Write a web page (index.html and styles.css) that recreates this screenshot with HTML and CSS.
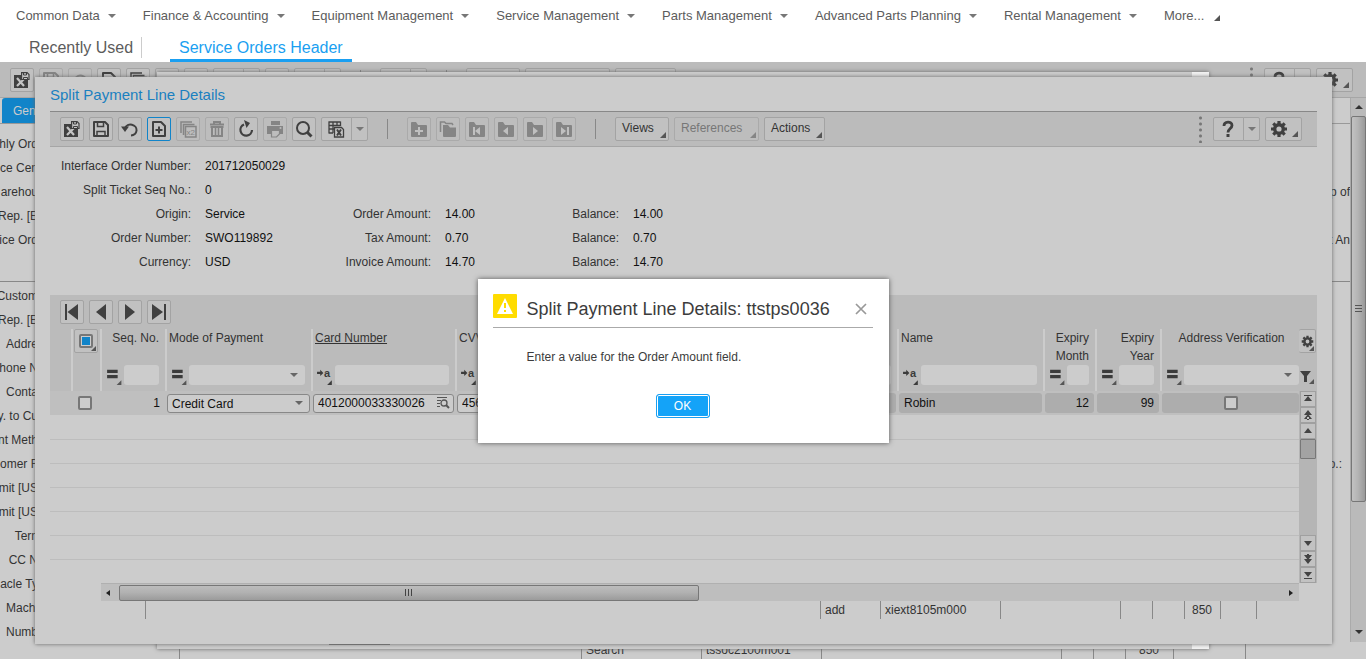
FILE: index.html
```html
<!DOCTYPE html>
<html lang="en">
<head>
<meta charset="utf-8">
<title>Service Orders Header</title>
<link rel="stylesheet" href="styles.css">
</head>
<body>
<svg class="defs" aria-hidden="true">
  <symbol id="exit" viewBox="0 0 18 18"><path fill="currentColor" d="M1 4h8v5h6v8H1z"/><path stroke="#c4c4c4" stroke-width="2.2" d="M4 7l7 8M11 8l-7 7"/><path fill="#c4c4c4" stroke="currentColor" stroke-width="1.200" d="M8.600 1.600h5.500l1.900 1.900v5H8.600z"/><path fill="none" stroke="currentColor" d="M10.500 2v2h3V2M10.500 8.500v-2h4v2"/></symbol>
  <symbol id="save" viewBox="0 0 18 18"><path fill="none" stroke="currentColor" stroke-width="2" stroke-linejoin="round" d="M2 2h11l3 3v11H2z"/><path fill="none" stroke="currentColor" stroke-width="1.500" d="M5.500 2v4.500h6V2M5 15.500v-4h8v4"/></symbol>
  <symbol id="undo" viewBox="0 0 18 18"><path fill="none" stroke="currentColor" stroke-width="2" d="M4 8a6 5.500 0 1 1 6 7.500"/><path fill="currentColor" d="M0 6.500h8L4 12z"/></symbol>
  <symbol id="new" viewBox="0 0 18 18"><path fill="none" stroke="currentColor" stroke-width="2" stroke-linejoin="round" d="M3 2h8l4 4v10H3z"/><path stroke="currentColor" stroke-width="2" d="M9 6.500v7M5.500 10h7"/></symbol>
  <symbol id="trash" viewBox="0 0 18 18"><path fill="none" stroke="currentColor" stroke-width="2" d="M2 4.500h14M6 4V2h6v2M4 7v9h10V7M2.500 7h13"/><path stroke="currentColor" stroke-width="1.500" d="M7.500 8v7M10.500 8v7"/></symbol>
  <symbol id="refresh" viewBox="0 0 18 18"><path fill="none" stroke="currentColor" stroke-width="2.200" d="M7 4.500a5.800 5.800 0 1 0 8 5.500"/><path fill="currentColor" d="M7 0l6 3-3.500 5z"/></symbol>
  <symbol id="print" viewBox="0 0 18 18"><path fill="currentColor" d="M5 1h9v4H5zM1 6h16v8h-3v-3H5v3H1z"/><path fill="none" stroke="currentColor" stroke-width="1.200" d="M5.500 11v6h5l3-3v-3"/><circle cx="14.500" cy="8" r="1" fill="#bbb"/></symbol>
  <symbol id="search" viewBox="0 0 18 18"><circle cx="8" cy="8" r="6" fill="none" stroke="currentColor" stroke-width="2"/><path stroke="currentColor" stroke-width="3" d="M12 12l4.500 4.500"/></symbol>
  <symbol id="excel" viewBox="0 0 18 18"><path fill="none" stroke="currentColor" stroke-width="1.300" d="M.5 2h12M.5 5.500h12M.5 9H6M.5 13H5M1 1.500V13M5 1.500V13M9 1.500V6M12.500 1.500V6"/><path fill="#c4c4c4" stroke="currentColor" stroke-width="1.300" d="M6.500 7.500h7l2 2v7.500h-9z"/><path stroke="currentColor" stroke-width="2" d="M9 9.500l4 6M13 9.500l-4 6"/></symbol>
  <symbol id="fold" viewBox="0 0 18 18"><path fill="currentColor" d="M1 3q0-1 1-1h4l2 3h8q1 0 1 1v10q0 1-1 1H2q-1 0-1-1z"/></symbol>
  <symbol id="fplus" viewBox="0 0 18 18"><use href="#fold"/><path stroke="#c0c0c0" stroke-width="2" d="M9 7v8M5 11h8"/></symbol>
  <symbol id="fmulti" viewBox="0 0 18 18"><path fill="none" stroke="currentColor" stroke-width="1.500" d="M1.500 12V2h4l1.500 1.500h6l1 1.500"/><path fill="currentColor" d="M4 5h5l2 2.500h6V16q0 1-1 1H5q-1 0-1-1z"/></symbol>
  <symbol id="ffirst" viewBox="0 0 18 18"><use href="#fold"/><path fill="#c0c0c0" d="M5 7h2v8H5zM12 7v8l-5-4z"/></symbol>
  <symbol id="fprev" viewBox="0 0 18 18"><use href="#fold"/><path fill="#c0c0c0" d="M11 7v8l-5-4z"/></symbol>
  <symbol id="fnext" viewBox="0 0 18 18"><use href="#fold"/><path fill="#c0c0c0" d="M7 7v8l5-4z"/></symbol>
  <symbol id="flast" viewBox="0 0 18 18"><use href="#fold"/><path fill="#c0c0c0" d="M12 7h2v8h-2zM6 7v8l5-4z"/></symbol>
  <symbol id="help" viewBox="0 0 18 18"><path fill="none" stroke="currentColor" stroke-width="2.800" d="M4 6C4 1 12 1 12 5.500 12 8.500 8 8.500 8 12.500"/><path fill="currentColor" d="M6.500 14h3v3h-3z"/></symbol>
  <symbol id="gear" viewBox="0 0 18 18"><circle cx="9" cy="9" r="4.300" fill="none" stroke="currentColor" stroke-width="3.400"/><path stroke="currentColor" stroke-width="3.200" d="M9 1v3M9 14v3M1 9h3M14 9h3M3.300 3.300l2 2M12.700 12.700l2 2M3.300 14.700l2-2M12.700 5.300l2-2"/></symbol>
  <symbol id="first" viewBox="0 0 18 18"><path fill="currentColor" d="M2 1h2v16H2zM15 1v16L4.500 9z"/></symbol>
  <symbol id="prev" viewBox="0 0 18 18"><path fill="currentColor" d="M14 1v16L4 9z"/></symbol>
  <symbol id="next" viewBox="0 0 18 18"><path fill="currentColor" d="M4 1v16l10-8z"/></symbol>
  <symbol id="last" viewBox="0 0 18 18"><path fill="currentColor" d="M14 1h2v16h-2zM2 1v16l11-8z"/></symbol>
  <symbol id="eq" viewBox="0 0 18 18"><path fill="currentColor" d="M2 4h10v3H2zM2 9h10v3H2z"/><path fill="#555" d="M15.500 14v5h-5z"/></symbol>
  <symbol id="lookup" viewBox="0 0 14 14"><path stroke="currentColor" d="M1 1.500h10M1 4.500h4M1 7.500h3M1 10.500h3"/><circle cx="8" cy="7" r="3" fill="none" stroke="currentColor" stroke-width="1.300"/><path stroke="currentColor" stroke-width="2" d="M10 9l3 3"/></symbol>
  <symbol id="funnel" viewBox="0 0 16 16"><path fill="currentColor" d="M1 2h11L8 7v6H5V7z"/><path fill="#555" d="M15 10v5h-5z"/></symbol>
  <symbol id="up1" viewBox="0 0 14 14"><path fill="currentColor" d="M3 9h8L7 4z"/></symbol>
  <symbol id="up2" viewBox="0 0 14 14"><path fill="currentColor" d="M3 7h8L7 2zM3 11h8L7 6zM6 9h2v3H6z"/></symbol>
  <symbol id="up3" viewBox="0 0 14 14"><path fill="currentColor" d="M3 3h8v1H3zM3 9h8L7 4z"/></symbol>
  <symbol id="dn1" viewBox="0 0 14 14"><path fill="currentColor" d="M3 5h8l-4 5z"/></symbol>
  <symbol id="dn2" viewBox="0 0 14 14"><path fill="currentColor" d="M3 3h8L7 8zM3 7h8l-4 5zM6 2h2v3H6z"/></symbol>
  <symbol id="dn3" viewBox="0 0 14 14"><path fill="currentColor" d="M3 10h8v1H3zM3 4h8L7 9z"/></symbol>
  <symbol id="pages" viewBox="0 0 18 18"><path fill="none" stroke="currentColor" stroke-width="1.500" d="M2 13V2h11M4.500 15V4.500h11M6.500 6.500H17V17H6.500z"/></symbol>
  <symbol id="to" viewBox="0 0 18 18"><path fill="currentColor" d="M1 6h3V4l3 3-3 3V8H1zM15 14v5h-5z"/></symbol>
</svg>

<nav class="menu">
  <button class="menu-item">Common Data<i class="caret"></i></button>
  <button class="menu-item">Finance &amp; Accounting<i class="caret"></i></button>
  <button class="menu-item">Equipment Management<i class="caret"></i></button>
  <button class="menu-item">Service Management<i class="caret"></i></button>
  <button class="menu-item">Parts Management<i class="caret"></i></button>
  <button class="menu-item">Advanced Parts Planning<i class="caret"></i></button>
  <button class="menu-item">Rental Management<i class="caret"></i></button>
  <button class="menu-item">More...<i class="corner"></i></button>
</nav>
<nav class="tabs">
  <a class="tab recent" href="#">Recently Used</a>
  <a class="tab current" href="#">Service Orders Header</a>
</nav>

<main class="workspace">
  <div class="toolbar back-toolbar">
    <button class="btn" aria-label="Save and exit"><svg><use href="#exit"/></svg></button>
    <button class="btn off" aria-label="Save"><svg><use href="#save"/></svg></button>
    <button class="btn off" aria-label="Undo"><svg><use href="#undo"/></svg></button>
    <button class="btn" aria-label="New"><svg><use href="#new"/></svg></button>
    <button class="btn" aria-label="Duplicate"><svg><use href="#pages"/></svg></button>
    <button class="btn" aria-label="Delete"></button>
    <button class="btn" aria-label="Refresh"></button>
    <span class="split"><button class="btn wide" aria-label="Print"></button><button class="btn drop" aria-label="Print options"></button></span>
    <button class="btn" aria-label="Find"></button>
    <span class="split"><button class="btn wide" aria-label="Export"></button><button class="btn drop" aria-label="Export options"></button></span>
    <i class="sep"></i>
    <span class="split"><button class="btn wide" aria-label="Notes"></button><button class="btn drop" aria-label="Note options"></button></span>
    <i class="sep"></i>
    <button class="btn text views" aria-label="Views"></button>
    <button class="btn text refs" aria-label="References"></button>
    <button class="btn text acts" aria-label="Actions"></button>
    <i class="dots"></i>
    <span class="split"><button class="btn wide" aria-label="Help"><svg><use href="#help"/></svg></button><button class="btn drop" aria-label="Help options"></button></span>
    <button class="btn gear" aria-label="Settings"><svg><use href="#gear"/></svg><i class="corner"></i></button>
  </div>
  <div class="back">
    <div class="back-body">
      <div class="back-tabs"><button class="back-tab">General</button></div>
      <div class="back-group">
        <div class="back-row"><span>hly Ord</span></div>
        <div class="back-row"><span>ce Cen</span></div>
        <div class="back-row"><span>arehou</span><span class="far">p of</span></div>
        <div class="back-row"><span>Rep. [E</span></div>
        <div class="back-row"><span>ice Ord</span><span class="far">t An</span></div>
      </div>
      <div class="back-group second">
        <div class="back-row"><span>Custom</span></div>
        <div class="back-row"><span>Rep. [E</span></div>
        <div class="back-row"><span>Addre</span></div>
        <div class="back-row"><span>hone N</span></div>
        <div class="back-row"><span>Conta</span></div>
        <div class="back-row"><span>y. to Cu</span></div>
        <div class="back-row"><span>nt Meth</span></div>
        <div class="back-row"><span>omer F</span><span class="far colon">o.:</span></div>
        <div class="back-row"><span>mit [US</span></div>
        <div class="back-row"><span>mit [US</span></div>
        <div class="back-row"><span>Tern</span></div>
        <div class="back-row"><span>CC N</span></div>
        <div class="back-row"><span>acle Ty</span></div>
        <div class="back-row"><span>Machi</span></div>
        <div class="back-row"><span>Numb</span></div>
      </div>
    </div>
    <div class="page-scroll"><i class="arrow-up"></i><div class="page-thumb"><i class="grip-v"></i></div><i class="arrow-down"></i></div>
  </div>
  <div class="status back-status">
    <span class="grow"></span><span class="w120">Search</span><span class="w120">tssoc2100m001</span><span class="w240"></span><span class="w32"></span><span class="w32"></span><span class="w48 num">850</span><span class="w72"></span><span class="tail"></span>
  </div>

  <div class="window middle"><i class="peek"></i><i class="tick"></i><i class="peek low"></i></div>

  <section class="window front">
    <h1 class="window-title">Split Payment Line Details</h1>
    <div class="toolbar">
      <button class="btn" aria-label="Save and exit"><svg><use href="#exit"/></svg></button>
      <button class="btn" aria-label="Save"><svg><use href="#save"/></svg></button>
      <button class="btn" aria-label="Undo"><svg><use href="#undo"/></svg></button>
      <button class="btn focus" aria-label="New"><svg><use href="#new"/></svg></button>
      <button class="btn off" aria-label="Duplicate"><svg><use href="#pages"/><text x="7.500" y="14.500" font-size="8" fill="currentColor">x2</text></svg></button>
      <button class="btn off" aria-label="Delete"><svg><use href="#trash"/></svg></button>
      <button class="btn" aria-label="Refresh"><svg><use href="#refresh"/></svg></button>
      <button class="btn off" aria-label="Print"><svg><use href="#print"/></svg></button>
      <button class="btn" aria-label="Find"><svg><use href="#search"/></svg></button>
      <span class="split"><button class="btn wide" aria-label="Export"><svg><use href="#excel"/></svg></button><button class="btn drop" aria-label="Export options"><i class="caret"></i></button></span>
      <i class="sep"></i>
      <button class="btn off" aria-label="New group"><svg><use href="#fplus"/></svg></button>
      <button class="btn off" aria-label="Duplicate group"><svg><use href="#fmulti"/></svg></button>
      <button class="btn off" aria-label="First group"><svg><use href="#ffirst"/></svg></button>
      <button class="btn off" aria-label="Previous group"><svg><use href="#fprev"/></svg></button>
      <button class="btn off" aria-label="Next group"><svg><use href="#fnext"/></svg></button>
      <button class="btn off" aria-label="Last group"><svg><use href="#flast"/></svg></button>
      <i class="sep"></i>
      <button class="btn text views">Views<i class="corner"></i></button>
      <button class="btn text refs off">References<i class="corner"></i></button>
      <button class="btn text acts">Actions<i class="corner"></i></button>
      <i class="dots"></i>
      <span class="split"><button class="btn wide" aria-label="Help"><svg><use href="#help"/></svg></button><button class="btn drop" aria-label="Help options"><i class="caret"></i></button></span>
      <button class="btn gear" aria-label="Settings"><svg><use href="#gear"/></svg><i class="corner"></i></button>
    </div>

    <dl class="fields">
      <dt>Interface Order Number:</dt><dd class="span">201712050029</dd>
      <dt>Split Ticket Seq No.:</dt><dd class="span">0</dd>
      <dt>Origin:</dt><dd>Service</dd><dt>Order Amount:</dt><dd>14.00</dd><dt>Balance:</dt><dd>14.00</dd>
      <dt>Order Number:</dt><dd>SWO119892</dd><dt>Tax Amount:</dt><dd>0.70</dd><dt>Balance:</dt><dd>0.70</dd>
      <dt>Currency:</dt><dd>USD</dd><dt>Invoice Amount:</dt><dd>14.70</dd><dt>Balance:</dt><dd>14.70</dd>
    </dl>

    <div class="grid">
      <div class="grid-nav">
        <button class="btn" aria-label="First"><svg><use href="#first"/></svg></button>
        <button class="btn" aria-label="Previous"><svg><use href="#prev"/></svg></button>
        <button class="btn" aria-label="Next"><svg><use href="#next"/></svg></button>
        <button class="btn" aria-label="Last"><svg><use href="#last"/></svg></button>
      </div>
      <div class="grid-main">
        <div class="lines-wrap">
        <table class="lines">
          <colgroup><col class="c21"><col class="c29"><col class="c65"><col class="c146"><col class="c144"><col class="c65"><col><col class="c146"><col class="c52"><col class="c65"><col class="c139"></colgroup>
          <thead>
            <tr>
              <th class="bare"></th>
              <th class="pick"><button class="btn" aria-label="Select all"><i class="box all"></i><i class="corner"></i></button></th>
              <th><div class="head end">Seq. No.</div><div class="filter"><svg><use href="#eq"/></svg><input aria-label="Filter Seq. No."></div></th>
              <th><div class="head">Mode of Payment</div><div class="filter"><svg><use href="#eq"/></svg><span class="select"><select aria-label="Filter Mode of Payment"><option></option></select></span></div></th>
              <th><div class="head"><u>Card Number</u></div><div class="filter"><svg><use href="#to"/><text x="8" y="12">a</text></svg><input aria-label="Filter Card Number"></div></th>
              <th><div class="head">CVV</div><div class="filter"><svg><use href="#to"/><text x="8" y="12">a</text></svg><input aria-label="Filter CVV"></div></th>
              <th><div class="head"></div><div class="filter"><input aria-label="Filter amount"></div></th>
              <th><div class="head">Name</div><div class="filter"><svg><use href="#to"/><text x="8" y="12">a</text></svg><input aria-label="Filter Name"></div></th>
              <th><div class="head end">Expiry<br>Month</div><div class="filter"><svg><use href="#eq"/></svg><input aria-label="Filter Expiry Month"></div></th>
              <th><div class="head end">Expiry<br>Year</div><div class="filter"><svg><use href="#eq"/></svg><input aria-label="Filter Expiry Year"></div></th>
              <th class="flush"><div class="head mid">Address Verification</div><div class="filter"><svg><use href="#eq"/></svg><span class="select"><select aria-label="Filter Address Verification"><option></option></select></span></div></th>
            </tr>
          </thead>
          <tbody>
            <tr class="active">
              <td></td>
              <td class="pick"><input type="checkbox" class="box" aria-label="Select line 1"></td>
              <td class="seq">1</td>
              <td><span class="select edit"><select aria-label="Mode of Payment"><option>Credit Card</option></select></span></td>
              <td><span class="edit with-icon"><input aria-label="Card Number" value="4012000033330026"><svg><use href="#lookup"/></svg></span></td>
              <td><span class="edit"><input aria-label="CVV" value="456"></span></td>
              <td><span class="cell"></span></td>
              <td><span class="cell">Robin</span></td>
              <td><span class="cell end">12</span></td>
              <td><span class="cell end">99</span></td>
              <td class="flush"><span class="cell mid"><input type="checkbox" class="box" aria-label="Address Verification"></span></td>
            </tr>
            <tr class="blank"><td colspan="11"></td></tr>
            <tr><td colspan="11"></td></tr>
            <tr><td colspan="11"></td></tr>
            <tr><td colspan="11"></td></tr>
            <tr><td colspan="11"></td></tr>
            <tr><td colspan="11"></td></tr>
            <tr><td colspan="11"></td></tr>
          </tbody>
        </table>
        </div>
        <div class="gutter">
          <div class="gutter-head">
            <button class="btn mini" aria-label="Grid settings"><svg><use href="#gear"/></svg><i class="corner"></i></button>
            <button class="plain" aria-label="Filter"><svg><use href="#funnel"/></svg></button>
          </div>
          <div class="vscroll">
            <button aria-label="First row"><svg><use href="#up3"/></svg></button>
            <button aria-label="Page up"><svg><use href="#up2"/></svg></button>
            <button aria-label="Row up"><svg><use href="#up1"/></svg></button>
            <i class="vthumb"></i>
            <i class="grow"></i>
            <button aria-label="Row down"><svg><use href="#dn1"/></svg></button>
            <button aria-label="Page down"><svg><use href="#dn2"/></svg></button>
            <button aria-label="Last row"><svg><use href="#dn3"/></svg></button>
          </div>
        </div>
      </div>
      <div class="hscroll"><i class="arrow-left"></i><div class="hthumb"><i class="grip-h"></i></div><i class="arrow-right"></i></div>
    </div>
    <div class="status">
      <span class="grow"></span><span class="w60">add</span><span class="w120">xiext8105m000</span><span class="w120"></span><span class="w32"></span><span class="w32"></span><span class="w36 num">850</span><span class="w36"></span><span class="tail"></span>
    </div>
  </section>

  <div class="modal-layer">
    <div class="modal" role="alertdialog" aria-labelledby="msg-title">
      <div class="modal-head">
        <svg class="warn" viewBox="0 0 24 24"><rect width="24" height="24" rx="1" fill="#ffdc00"/><path fill="#fff" d="M12 4l8 16H4z"/><path fill="#ffdc00" d="M11 9h2v5h-2zM11 16h2v2h-2z"/></svg>
        <h2 id="msg-title">Split Payment Line Details: ttstps0036</h2>
        <button class="close" aria-label="Close"><svg viewBox="0 0 12 12"><path stroke="#999" stroke-width="1.700" d="M1 1l10 10M11 1L1 11"/></svg></button>
      </div>
      <p class="modal-text">Enter a value for the Order Amount field.</p>
      <button class="ok">OK</button>
    </div>
  </div>
</main>
</body>
</html>
```
FILE: styles.css
```css
* { box-sizing: border-box; }
body {
  margin: 0;
  height: 100vh;
  display: flex;
  flex-direction: column;
  overflow: hidden;
  background: #fff;
  color: #333;
  font: 12px/18px "Liberation Sans", Arial, sans-serif;
}
button, input, select { font: inherit; color: inherit; margin: 0; padding: 0; border: 0; background: none; }
h1, h2, p, dl, dd { margin: 0; font-weight: normal; }
i { display: block; }
.defs { position: absolute; width: 0; height: 0; }
.grow { flex: 1; }

.caret { width: 0; height: 0; border: 4px solid transparent; border-top: 4px solid #777; border-bottom: 0; }
.corner { width: 0; height: 0; border-left: 6px solid transparent; border-bottom: 6px solid #555; }

/* Top navigation */
.menu { display: flex; gap: 27px; padding: 0 16px; height: 31px; flex: none; }
.menu-item { display: flex; align-items: center; gap: 8px; font-size: 13px; color: #5c5c5c; white-space: nowrap; }
.menu-item .corner { margin: 5px 0 0 2px; }
.tabs { display: flex; height: 31px; flex: none; padding-left: 29px; }
.tab { font-size: 16px; line-height: 21px; color: #5c5c5c; text-decoration: none; white-space: nowrap; }
.recent { height: 21px; margin-top: 6px; padding-right: 8px; border-right: 1px solid #ccc; }
.current { margin-left: 28px; padding: 6px 9px 0; color: #1a9ff1; border-bottom: 3px solid #1a9ff1; }

/* Background page */
.workspace { position: relative; flex: 1; min-height: 0; display: flex; flex-direction: column; background: #ccc; overflow: hidden; }
.toolbar { display: flex; align-items: center; gap: 5px; height: 35px; flex: none; padding: 0 15px 0 10px; background: #bbb; border-bottom: 1px solid #a6a6a6; }
.back-toolbar { height: 36px; padding-right: 13px; }
.back { display: flex; flex: 1; min-height: 0; }
.back-body { flex: 1; min-width: 0; overflow: hidden; }
.back-tabs { height: 26px; padding-left: 2px; border-bottom: 1px solid #999; }
.back-tab { height: 25px; padding: 0 11px; background: #1184c9; color: #ccc; border-radius: 3px 3px 0 0; }
.back-group { padding-top: 8px; }
.back-group.second { margin-top: 29px; padding-top: 2px; border-top: 1px solid #888; }
.back-row { display: flex; justify-content: space-between; height: 24px; line-height: 24px; white-space: nowrap; }
.back-row span:first-child { width: 38px; display: flex; justify-content: flex-end; }
.colon { padding-right: 8px; }
.page-scroll { width: 16px; display: flex; flex-direction: column; align-items: center; background: #bababa; border-left: 1px solid #aaa; margin-bottom: 4px; }
.arrow-up { margin: 7px 0; border: 4px solid transparent; border-top: 0; border-bottom: 4px solid #333; }
.arrow-down { margin: auto 0 8px; border: 4px solid transparent; border-bottom: 0; border-top: 4px solid #333; }
.page-thumb { width: 15px; height: 71%; display: flex; align-items: center; justify-content: center; border: 1px solid #777; border-radius: 2px; background: linear-gradient(90deg, #c2c2c2, #b4b4b4 45%, #999); }
.grip-v { width: 7px; height: 8px; background: repeating-linear-gradient(#555 0 1px, transparent 1px 3px); }

/* Buttons */
.btn { width: 24px; height: 24px; flex: none; display: flex; align-items: center; justify-content: center; border: 1px solid #a3a3a3; border-radius: 2px; background: #c1c1c1; color: #404040; }
.btn svg { width: 18px; height: 18px; flex: none; }
.btn.off { color: #858585; border-color: #aaa; background: #bdbdbd; }
.btn.off .corner { border-bottom-color: #858585; }
.btn.focus { border-color: #1184c9; }
.split { display: flex; }
.split .wide { width: 31px; border-radius: 2px 0 0 2px; }
.split .drop { width: 17px; margin-left: -1px; border-radius: 0 2px 2px 0; }
.sep { width: 1px; height: 20px; margin: 0 14px; background: #888; }
.btn.text { justify-content: space-between; align-items: flex-end; padding: 0 2px 2px 6px; line-height: 19px; color: #333; }
.btn.text.off { color: #777; }
.views { width: 54px; }
.refs { width: 85px; }
.acts { width: 61px; }
.dots { width: 3px; height: 28px; margin: 0 6px 0 auto; background: radial-gradient(circle, #777 1px, transparent 2px) 0 0 / 3px 6px; }
.gear { width: 37px; gap: 4px; }
.gear .corner { margin-top: 10px; }

/* Windows */
.window { position: absolute; background: #ccc; box-shadow: 0 0 4px #666; }
.middle { top: 10px; right: 157px; bottom: 10px; left: 157px; }
.peek { position: absolute; top: 0; right: 0; width: 17px; height: 6px; background: #f2f2f2; }
.peek.low { top: auto; bottom: 0; }
.tick { position: absolute; bottom: 4px; left: 172px; width: 61px; height: 1px; background: #777; }
.front { top: 15px; right: 34px; bottom: 15px; left: 35px; padding: 0 15px; display: flex; flex-direction: column; }
.window-title { height: 34px; flex: none; font-size: 15px; line-height: 36px; color: #1a80c0; }
.front .toolbar { border-top: 1px solid #888; height: 36px; }

.fields { display: grid; grid-template-columns: 141px 98px 114px 77px 83px auto; column-gap: 14px; grid-auto-rows: 24px; line-height: 24px; margin-top: 7px; white-space: nowrap; }
.fields dt { text-align: right; }
.fields dd { color: #111; }
.fields .span { grid-column: 2 / -1; }

/* Data grid */
.grid { margin-top: 21px; flex: none; }
.grid-nav { display: flex; gap: 5px; height: 34px; padding: 5px 10px; background: #bbb; }
.grid-main { display: flex; }
.lines-wrap { flex: 1; min-width: 0; overflow: hidden; }
.lines { width: 100%; table-layout: fixed; border-collapse: collapse; }
.c21 { width: 21px; } .c29 { width: 29px; } .c52 { width: 52px; } .c65 { width: 65px; }
.c139 { width: 139px; } .c144 { width: 144px; } .c146 { width: 146px; }
.lines th { height: 62px; padding: 0 6px 0 2px; background: #bbb linear-gradient(#ccc, #ccc) 0 0 / 2px 100% no-repeat; font-weight: normal; text-align: left; vertical-align: top; }
.lines th.bare { background: #bbb; }
.lines th.flush { padding-right: 0; }
.lines th.pick { padding: 0 0 0 3px; }
.head { height: 36px; padding-left: 2px; white-space: nowrap; }
.end { text-align: right; }
.mid { text-align: center; }
.filter { display: flex; height: 20px; padding-left: 3px; }
.filter svg { width: 19px; height: 20px; flex: none; overflow: visible; color: #3c3c3c; }
.filter text { font-size: 11px; font-weight: bold; fill: #3c3c3c; }
.filter input, .filter .select { flex: 1; min-width: 0; height: 20px; background: #ccc; border-radius: 3px; }
.select { display: flex; align-items: center; }
.select select { flex: 1; min-width: 0; height: 100%; appearance: none; }
.select::after { content: ""; flex: none; margin-right: 7px; border: 4px solid transparent; border-top-color: #666; border-bottom: 0; }
.lines td { height: 24px; padding: 0 1px 0 2px; border-top: 1px solid #bdbdbd; }
.lines .active td, .lines .blank td { border-top: 0; }
.active { background: #bfbfbf; color: #111; }
.lines .active .seq { padding-right: 5px; text-align: right; }
.lines td.pick { padding-left: 7px; }
.lines td.flush { padding-right: 0; }
.box { display: block; width: 14px; height: 14px; appearance: none; border: 2px solid #777; border-radius: 2px; background: #ccc; }
.box.all { background: #1184c9; box-shadow: inset 0 0 0 1px #ccc; }
.pick .btn { position: relative; }
.pick .btn .corner { position: absolute; right: 1px; bottom: 1px; border-width: 0 0 5px 5px; }
.edit { display: flex; align-items: center; height: 19px; padding-left: 4px; border: 1px solid #888; border-radius: 3px; background: #ccc; }
.edit input { flex: 1; min-width: 0; height: 17px; }
.edit.with-icon svg { width: 14px; height: 14px; margin-right: 3px; color: #555; }
.edit.select::after { margin-right: 6px; }
.cell { display: block; height: 20px; line-height: 20px; padding: 0 5px; border-radius: 3px; background: #adadad; }
.cell.mid { display: flex; justify-content: center; align-items: center; }

.gutter { width: 18px; flex: none; display: flex; flex-direction: column; background: #b5b5b5; }
.gutter-head { height: 62px; display: flex; flex-direction: column; justify-content: space-between; background: #bbb; padding-bottom: 6px; }
.btn.mini { position: relative; width: 17px; border-left: 0; }
.mini svg { width: 13px; height: 13px; }
.mini .corner { position: absolute; right: 1px; bottom: 1px; border-width: 0 0 5px 5px; }
.plain { width: 16px; height: 16px; color: #404040; }
.plain svg { width: 16px; height: 16px; display: block; }
.vscroll { flex: 1; display: flex; flex-direction: column; padding-left: 1px; width: 17px; }
.vscroll button { height: 16px; display: flex; border: 1px solid #a0a0a0; background: #c2c2c2; color: #444; }
.vscroll svg { width: 14px; height: 14px; }
.vthumb { height: 20px; border: 1px solid #777; border-radius: 1px; background: #a3a3a3; }
.hscroll { display: flex; align-items: center; height: 18px; margin: 0 18px 0 51px; background: #bebebe; border-top: 1px solid #b0b0b0; }
.arrow-left { margin: 0 9px 0 5px; border: 3px solid transparent; border-left: 0; border-right: 4px solid #222; }
.arrow-right { margin: 0 6px 0 auto; border: 3px solid transparent; border-right: 0; border-left: 4px solid #222; }
.hthumb { width: 48.4%; height: 16px; display: flex; align-items: center; justify-content: center; border: 1px solid #777; border-radius: 2px; background: linear-gradient(#bcbcbc, #b2b2b2 45%, #9b9b9b); }
.grip-h { width: 8px; height: 7px; background: repeating-linear-gradient(90deg, #444 0 1px, transparent 1px 3px); }

.status { display: flex; height: 18px; flex: none; margin-left: 95px; margin-right: 15px; }
.status span { border-left: 1px solid #888; padding-left: 4px; white-space: nowrap; }
.status .num { padding-left: 7px; }
.tail { width: 46px; }
.w32 { width: 32px; } .w36 { width: 36px; } .w48 { width: 48px; } .w60 { width: 60px; }
.w72 { width: 72px; } .w120 { width: 120px; } .w240 { width: 240px; }
.back-status { margin: -3px 75px 0 179px; line-height: 14px; height: 16px; }
.back-status .num { padding-left: 13px; }

/* Message box */
.modal-layer { position: absolute; inset: 0; display: flex; align-items: center; justify-content: center; }
.modal { width: 411px; height: 164px; padding: 15px 16px 15px 15px; display: flex; flex-direction: column; background: #fff; box-shadow: 0 0 5px #555; }
.modal-head { display: flex; height: 34px; border-bottom: 1px solid #aaa; }
.warn { width: 24px; height: 24px; }
.modal h2 { flex: 1; margin-left: 10px; font-size: 18px; line-height: 30px; color: #3c3c3c; white-space: nowrap; }
.close { width: 12px; height: 12px; margin: 9px 6px 0 0; }
.close svg { display: block; }
.modal-text { margin: 20px 0 28px 34px; color: #3c3c3c; }
.ok { align-self: center; width: 54px; height: 24px; color: #fff; background: #14a3f8; border: 1px solid #1a9ff1; border-radius: 3px; box-shadow: inset 0 0 0 1px #fff; }
```
